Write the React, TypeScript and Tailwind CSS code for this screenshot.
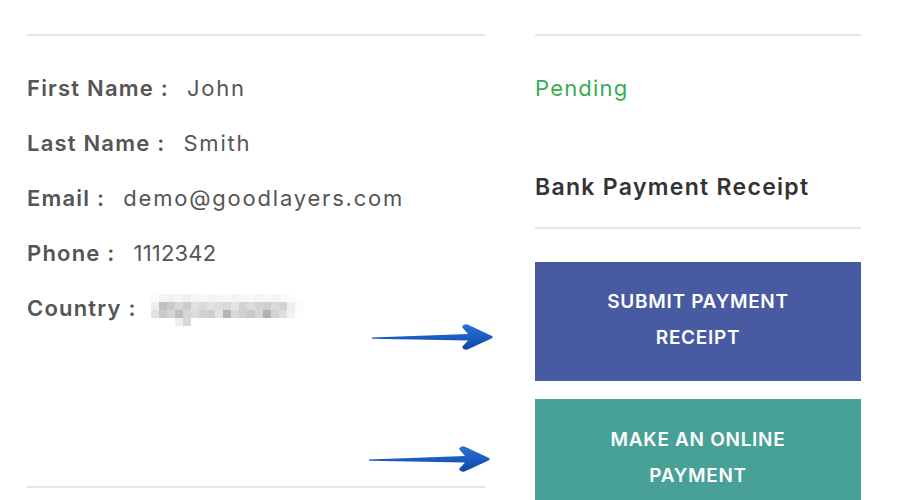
import React from "react";

const font = { fontFamily: "Inter, 'Open Sans', sans-serif" };

function Arrow() {
  return (
    <svg width="124" height="30" viewBox="0 0 124 30">
      <defs>
        <linearGradient id="ag" x1="0" y1="0" x2="0" y2="1">
          <stop offset="0" stopColor="#2c72d8" />
          <stop offset="1" stopColor="#0c47a6" />
        </linearGradient>
      </defs>
      <path
        d="M1 15.4 L97 12 L91 5 Q92.5 1.5 96.5 2.5 L121 14 Q122.5 15 121 16.2 L96.5 27.5 Q92.5 28.5 91 25 L97 18.6 L1 16.8 Z"
        fill="url(#ag)"
      />
    </svg>
  );
}

const pix: string[][] = [
  ["#fdfdfd", "#f4f4f4", "#f2f2f2", "#f5f5f5", "#f0f0f0", "#f6f6f6", "#f7f7f7", "#f5f5f5", "#f6f6f6", "#f8f8f8", "#f3f3f3", "#f6f6f6", "#f8f8f8", "#f4f4f4", "#f7f7f7", "#f5f5f5", "#f9f9f9", "#fdfdfd", "#ffffff"],
  ["#efefef", "#c0c0c0", "#cacaca", "#d8d8d8", "#cbcbcb", "#e0e0e0", "#dadada", "#e2e2e2", "#dedede", "#d9d9d9", "#e3e3e3", "#d2d2d2", "#dcdcdc", "#d4d4d4", "#cfcfcf", "#d9d9d9", "#d3d3d3", "#eeeeee", "#fafafa"],
  ["#e2e2e2", "#cacaca", "#d4d4d4", "#bebebe", "#d6d6d6", "#dcdcdc", "#d2d2d2", "#cdcdcd", "#e3e3e3", "#b5b5b5", "#d8d8d8", "#d0d0d0", "#c8c8c8", "#d6d6d6", "#b2b2b2", "#d2d2d2", "#dedede", "#f1f1f1", "#fcfcfc"],
  ["#ffffff", "#ffffff", "#ffffff", "#eeeeee", "#dadada", "#ffffff", "#ffffff", "#ffffff", "#ffffff", "#ffffff", "#ffffff", "#ffffff", "#ffffff", "#ffffff", "#ffffff", "#ffffff", "#ffffff", "#ffffff", "#ffffff"],
];

function Pixelated() {
  return (
    <div className="flex flex-col">
      {pix.map((row, i) => (
        <div key={i} className="flex">
          {row.map((c, j) => (
            <div key={j} className="h-[8px] w-[8px]" style={{ backgroundColor: c }} />
          ))}
        </div>
      ))}
    </div>
  );
}

function Row({ label, value, blurred, tight }: { label: string; value: string; blurred?: boolean; tight?: boolean }) {
  return (
    <div className="flex h-[55px] items-center text-[22px] text-[#555]">
      <span className="font-semibold tracking-[1.2px]">{label}</span>
      {blurred ? (
        <span className="ml-[14px] mt-[2px] flex items-center">
          <Pixelated />
        </span>
      ) : (
        <span className={tight ? "ml-[18px] tracking-[0.2px]" : "ml-[18px] tracking-[1.8px]"}>{value}</span>
      )}
    </div>
  );
}

export default function App() {
  return (
    <div className="relative h-[500px] w-[900px] overflow-hidden bg-white" style={font}>
      <div className="flex pt-[34px]">
        <div className="ml-[27px] w-[458px]">
          <div className="h-[2px] bg-[#e6e6e6]" />
          <div className="pt-[25px]">
            <Row label="First Name :" value="John" />
            <Row label="Last Name :" value="Smith" />
            <Row label="Email :" value="demo@goodlayers.com" />
            <Row label="Phone :" value="1112342" tight />
            <Row label="Country :" value="" blurred />
          </div>
          <div className="mt-[150px] h-[2px] bg-[#e6e6e6]" />
        </div>
        <div className="ml-[50px] w-[326px]">
          <div className="h-[2px] bg-[#e6e6e6]" />
          <div className="flex h-[104px] items-center text-[22px] tracking-[1.2px] text-[#3aaa57]">
            <span>Pending</span>
          </div>
          <div className="mt-[32px] text-[23px] font-semibold leading-[30px] tracking-[1.3px] text-[#333]">
            Bank Payment Receipt
          </div>
          <div className="mt-[25px] h-[2px] bg-[#e6e6e6]" />
          <div className="mt-[33px] flex h-[119px] flex-col items-center pt-[22px] bg-[#485ba2] text-[19px] font-semibold leading-[36px] tracking-[0.7px] text-white">
            <span>SUBMIT PAYMENT</span>
            <span>RECEIPT</span>
          </div>
          <div className="mt-[18px] flex h-[119px] flex-col items-center pt-[23px] bg-[#48a197] text-[19px] font-semibold leading-[36px] tracking-[0.7px] text-white">
            <span>MAKE AN ONLINE</span>
            <span>PAYMENT</span>
          </div>
        </div>
      </div>
      <div className="absolute left-[371px] top-[322px]">
        <Arrow />
      </div>
      <div className="absolute left-[368px] top-[444px]">
        <Arrow />
      </div>
    </div>
  );
}
